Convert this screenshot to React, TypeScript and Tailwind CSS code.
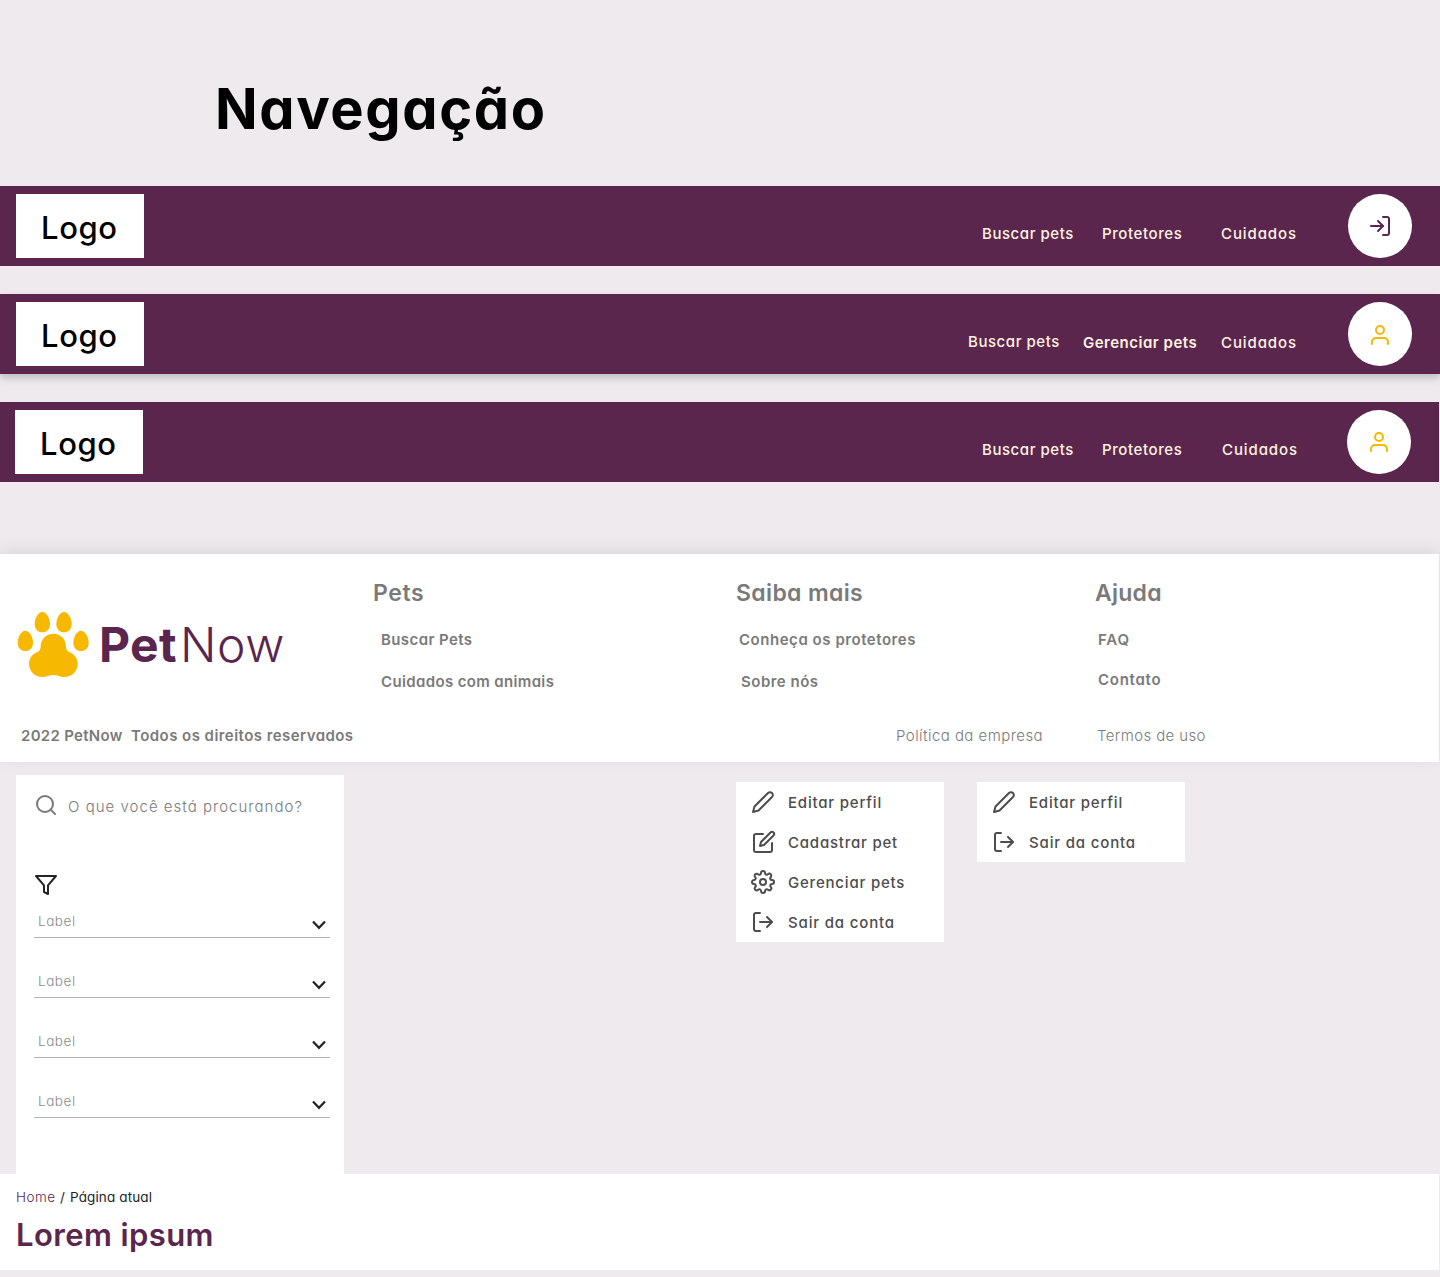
import type { ReactNode } from "react";
import { FiEdit, FiEdit2, FiFilter, FiLogIn, FiLogOut, FiSearch, FiSettings, FiUser } from "react-icons/fi";

function Paw() {
  return (
    <svg className="h-[90px] w-[90px] shrink-0" viewBox="0 0 270 270" fill="#f7b801">
      <path d="M97 36c13 0 23 20 23 36 0 15-9 25-23 25S74 87 74 72c0-16 10-36 23-36z" />
      <path d="M162 36c13 0 23 20 23 36 0 15-9 25-23 25s-23-10-23-25c0-16 10-36 23-36z" />
      <path d="M46 92c13 0 23 20 23 36 0 15-9 25-23 25s-23-10-23-25c0-16 10-36 23-36z" />
      <path d="M213 92c13 0 23 20 23 36 0 15-9 25-23 25s-23-10-23-25c0-16 10-36 23-36z" />
      <path d="M130 101C108 101 92 118 92 140C91 150 88 153 80 157C66 164 57 176 57 191C57 214 75 231 97 231C110 231 118 225 130 225C142 225 150 231 163 231C186 231 203 214 203 191C203 176 194 164 180 157C172 153 169 150 168 140C168 118 152 101 130 101Z" />
    </svg>
  );
}

function NavBar({ className, icon, children }: { className: string; icon: ReactNode; children: ReactNode }) {
  return (
    <header className={`flex h-20 shrink-0 items-center bg-[#5b264d] ${className}`}>
      <div className="flex h-16 w-32 items-center bg-white pt-1 pl-[25px] text-[31px] font-medium tracking-[0.6px] text-black">
        Logo
      </div>
      <nav className="ml-auto flex items-center text-[15px] leading-6 font-medium whitespace-nowrap text-[#fff3e0]">
        {children}
      </nav>
      <div className="flex size-16 shrink-0 items-center justify-center rounded-full bg-white">{icon}</div>
    </header>
  );
}

function FooterColumn({ title, className, children }: { title: ReactNode; className: string; children: ReactNode }) {
  return (
    <div className={`shrink-0 pt-[27px] ${className}`}>
      <h2 className="text-[23px] leading-[25px] font-semibold">{title}</h2>
      <ul className="pt-[22px] text-[15px] leading-6 font-semibold">{children}</ul>
    </div>
  );
}

function MenuItem({ icon, children }: { icon: ReactNode; children: ReactNode }) {
  return (
    <li className="flex h-10 items-center gap-[13px] pl-[15px] text-2xl">
      {icon}
      <span className="pt-[2px] text-[15px] leading-6 font-medium whitespace-nowrap">{children}</span>
    </li>
  );
}

function SelectField() {
  return (
    <div className="flex h-[34px] items-center justify-between border-b border-[#b3b3b3] pr-1 pl-1">
      <span className="pt-[2px] text-[13.5px] font-light tracking-[0.55px] text-[#8a8a8a]">Label</span>
      <svg className="mt-[9px] h-[10px] w-[14px]" viewBox="0 0 14 10" fill="none" stroke="#212529" strokeWidth="2.2">
        <path d="M1 1.4 7 7.8 13 1.4" />
      </svg>
    </div>
  );
}

export default function App() {
  return (
    <div className="flex h-[1277px] w-[1440px] flex-col overflow-hidden bg-[#eeeaed] font-['Inter',sans-serif] [font-feature-settings:'cv11']">
      <h1 className="h-[186px] shrink-0 pt-[74px] pl-[215px] text-[56px] leading-[71px] font-bold tracking-[1.6px] text-black">
        Navegação
      </h1>

      <NavBar className="w-full pr-7 pl-4" icon={<FiLogIn className="size-6 text-[#5b264d]" />}>
        <a className="w-[120px] pt-[15px] tracking-[0.55px]">Buscar pets</a>
        <a className="w-[119px] pt-[15px] tracking-[0.6px]">Protetores</a>
        <a className="w-[127px] pt-[15px] tracking-[0.9px]">Cuidados</a>
      </NavBar>
      <NavBar
        className="mt-7 w-full pr-7 pl-4 shadow-[0_4px_8px_rgba(0,0,0,0.2)]"
        icon={<FiUser className="mt-[2px] size-6 text-[#f7b801]" />}
      >
        <a className="w-[115px] pt-[15px] tracking-[0.55px]">Buscar pets</a>
        <a className="w-[138px] pt-[17px] font-semibold tracking-[0.5px]">Gerenciar pets</a>
        <a className="w-[127px] pt-[17px] tracking-[0.9px]">Cuidados</a>
      </NavBar>
      <NavBar className="mt-7 w-[1439px] pr-7 pl-[15px]" icon={<FiUser className="size-6 text-[#f7b801]" />}>
        <a className="w-[120px] pt-[15px] tracking-[0.55px]">Buscar pets</a>
        <a className="w-[120px] pt-[15px] tracking-[0.6px]">Protetores</a>
        <a className="w-[125px] pt-[15px] tracking-[0.9px]">Cuidados</a>
      </NavBar>

      <footer className="mt-[72px] flex h-[208px] w-[1439px] shrink-0 flex-col bg-white whitespace-nowrap text-[#7a7a7a] shadow-[0_-4px_16px_rgba(0,0,0,0.08)]">
        <div className="flex h-[168px]">
          <div className="flex w-[373px] shrink-0 pt-[46px] pl-[10px]">
            <Paw />
            <div className="-ml-px flex h-[90px] items-center text-5xl leading-none text-[#5b264d]">
              <span className="w-[81px] font-bold tracking-[0.4px]">Pet</span>
              <span className="font-light tracking-[0.6px]">Now</span>
            </div>
          </div>
          <FooterColumn className="w-[363px]" title={<span className="tracking-[0.6px]">Pets</span>}>
            <li className="pl-2 tracking-[0.4px]">Buscar Pets</li>
            <li className="pt-[18px] pl-2 tracking-[0.36px]">Cuidados com animais</li>
          </FooterColumn>
          <FooterColumn className="w-[359px]" title={<span className="tracking-[0.35px]">Saiba mais</span>}>
            <li className="pl-[3px] tracking-[0.54px]">Conheça os protetores</li>
            <li className="pt-[18px] pl-[5px] tracking-[0.5px]">Sobre nós</li>
          </FooterColumn>
          <FooterColumn className="w-[300px]" title={<span className="tracking-[0.25px]">Ajuda</span>}>
            <li className="pl-[3px] tracking-[0.8px]">FAQ</li>
            <li className="pt-4 pl-[3px] tracking-[0.75px]">Contato</li>
          </FooterColumn>
        </div>
        <div className="flex pt-[2px] pl-[21px] text-[15px] leading-6">
          <p className="flex w-[875px] font-semibold">
            <span className="w-[110px] tracking-[0.3px]">2022 PetNow</span>
            <span className="tracking-[0.45px]">Todos os direitos reservados</span>
          </p>
          <a className="w-[201px] font-light tracking-[0.45px]">Política da empresa</a>
          <a className="font-light tracking-[0.37px]">Termos de uso</a>
        </div>
      </footer>

      <div className="flex h-[412px] shrink-0">
        <aside className="mt-[13px] ml-4 h-[399px] w-[328px] bg-white pr-[14px] pl-[18px]">
          <label className="flex items-start gap-[10px] pt-[18px] text-[#7a7a7a]">
            <FiSearch className="size-6 shrink-0" />
            <span className="pt-[2px] text-[15px] leading-6 font-light tracking-[1.02px] whitespace-nowrap">
              O que você está procurando?
            </span>
          </label>
          <FiFilter className="mt-[54px] size-6 text-[#212529]" />
          <div className="flex flex-col gap-[26px] pt-[7px]">
            <SelectField />
            <SelectField />
            <SelectField />
            <SelectField />
          </div>
        </aside>
        <ul className="mt-5 ml-[392px] h-40 w-52 bg-white text-[#4d4d4d]">
          <MenuItem icon={<FiEdit2 />}>
            <span className="tracking-[0.8px]">Editar perfil</span>
          </MenuItem>
          <MenuItem icon={<FiEdit className="translate-x-px" />}>
            <span className="tracking-[0.78px]">Cadastrar pet</span>
          </MenuItem>
          <MenuItem icon={<FiSettings />}>
            <span className="tracking-[0.8px]">Gerenciar pets</span>
          </MenuItem>
          <MenuItem icon={<FiLogOut />}>
            <span className="tracking-[0.84px]">Sair da conta</span>
          </MenuItem>
        </ul>
        <ul className="mt-5 ml-[33px] h-20 w-52 bg-white text-[#4d4d4d]">
          <MenuItem icon={<FiEdit2 />}>
            <span className="tracking-[0.8px]">Editar perfil</span>
          </MenuItem>
          <MenuItem icon={<FiLogOut />}>
            <span className="tracking-[0.84px]">Sair da conta</span>
          </MenuItem>
        </ul>
      </div>

      <section className="h-24 w-[1439px] shrink-0 bg-white pl-4">
        <p className="flex pt-[13px] text-[13.5px] leading-5 text-[#212529]">
          <span className="w-[44px] font-light tracking-[0.45px] text-[#5b264d]">Home</span>
          <span className="w-[10px]">/</span>
          <span className="tracking-[0.12px]">Página atual</span>
        </p>
        <h2 className="pt-2 text-[31px] leading-10 font-semibold tracking-[0.4px] text-[#5b264d]">Lorem ipsum</h2>
      </section>
    </div>
  );
}
